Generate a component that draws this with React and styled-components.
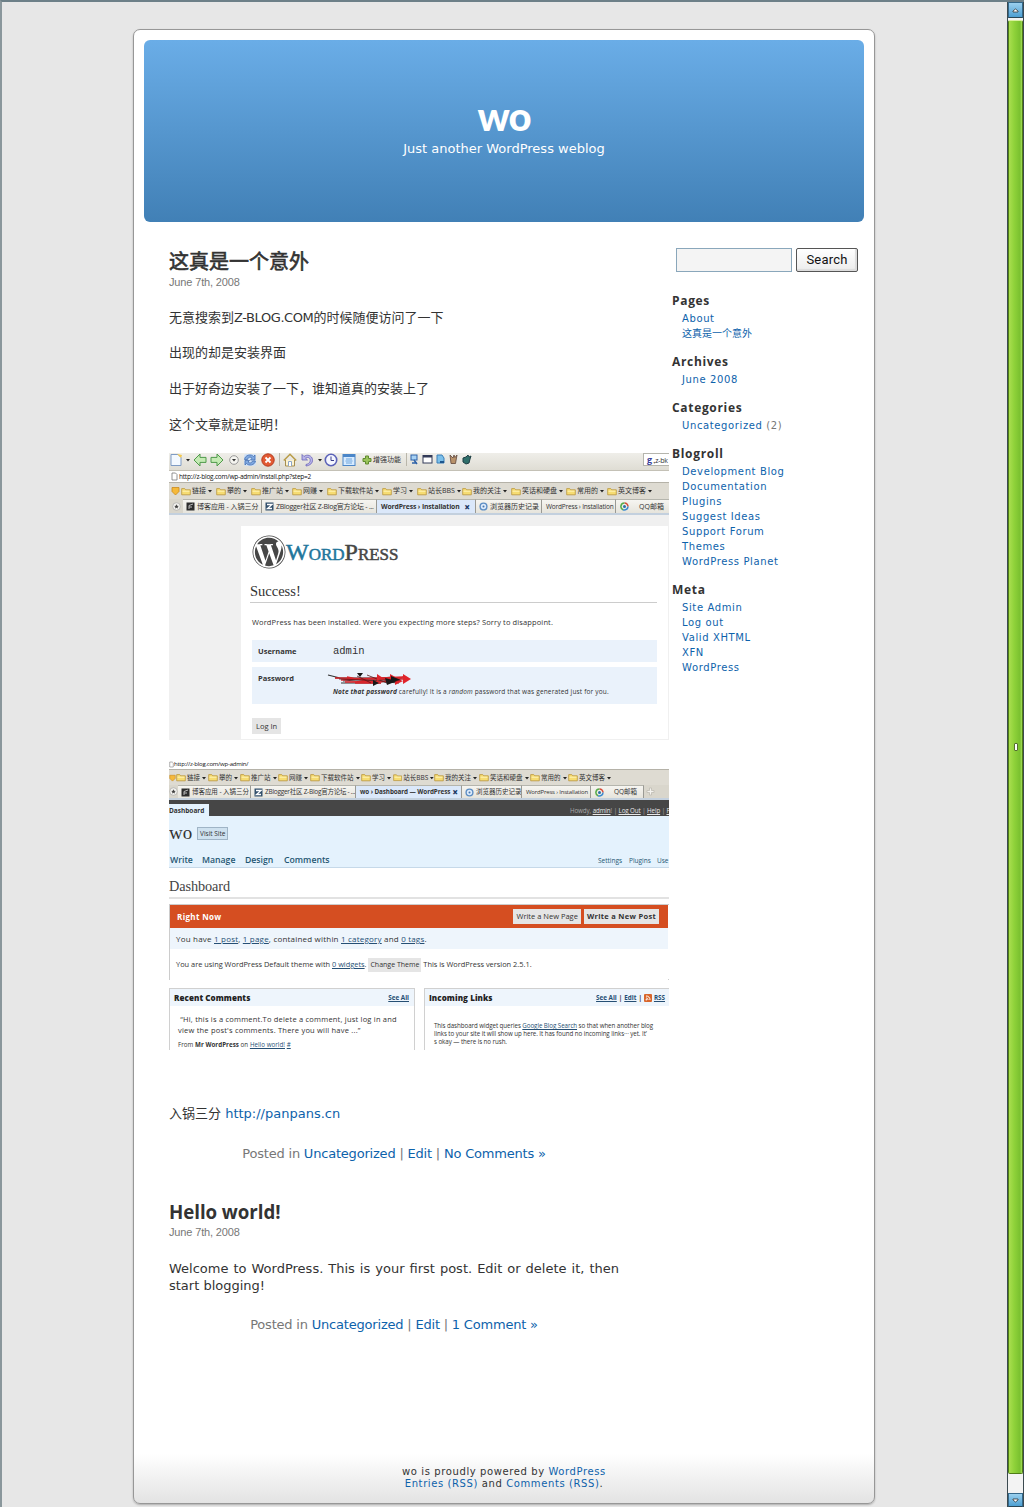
import React from "react";
import styled, { createGlobalStyle, css } from "styled-components";
import { FaWordpress } from "react-icons/fa";

const GlobalStyle = createGlobalStyle`
  *, *::before, *::after { box-sizing: border-box; }
  body { margin: 0; background: #e7e7e7; }
  a { color: #06c; text-decoration: none; }
`;

const verdana = `"DejaVu Sans", "Noto Sans CJK SC", sans-serif`;
const lucida = `"Open Sans", "Noto Sans CJK SC", sans-serif`;
const serif = `"Liberation Serif", serif`;
const tahoma = `"Open Sans", "Noto Sans CJK SC", sans-serif`;

/* ---------- window ---------- */

const Window = styled.div`
  display: flex;
  height: 1507px;
  border-top: 2px solid #6d8088;
  border-left: 2px solid #8a979c;
  background: #e7e7e7;
  font-family: ${verdana};
  color: #333;
  overflow: hidden;
`;

const Viewport = styled.div`
  width: 1005px;
  padding: 27px 0 0 131px;
`;

const ScrollBar = styled.div`
  width: 17px;
  display: flex;
  flex-direction: column;
  background: #f3f3f3;
  border-left: 1px solid #3c4a50;
  border-right: 1px solid #3c4a50;
`;

const ScrollButton = styled.div`
  height: ${(p) => p.$h}px;
  border: 1px solid #35688a;
  border-bottom-color: #2a4656;
  background: linear-gradient(#9bd0ee, #4d9fd2);
  display: flex;
  align-items: center;
  justify-content: center;
`;

const Thumb = styled.div`
  flex: 1;
  margin: 2px 0 19px;
  border: 1px solid #4f7c17;
  border-top-color: #d9f0a0;
  border-radius: 2px;
  background: linear-gradient(90deg, #a9de4f, #8fd23a 40%, #79c02f 85%, #a4dc5a);
  display: flex;
  align-items: center;
  justify-content: center;
`;

const Grip = styled.div`
  width: 4px;
  height: 8px;
  border: 1px solid #55702f;
  background: #fff;
  border-radius: 1px;
`;

/* ---------- page ---------- */

const Page = styled.div`
  width: 742px;
  height: 1475px;
  padding: 10px;
  border: 1px solid #979797;
  border-radius: 7px;
  box-shadow: 0 1px 2px rgba(0, 0, 0, 0.25);
  background: linear-gradient(#fff 0, #fff 1424px, #e3e3e3 1473px);
  display: flex;
  flex-direction: column;
`;

const Header = styled.header`
  height: 182px;
  flex: none;
  border-radius: 6px;
  background: linear-gradient(#6aade7, #4180b6);
  color: #fff;
  text-align: center;
  padding-top: 54px;
`;

const BlogTitle = styled.h1`
  margin: 0 0 3px;
  font: 900 40px/44px Lato, sans-serif;
  letter-spacing: -1px;
`;

const Tagline = styled.div`
  font-size: 13px;
  line-height: 16px;
`;

const Columns = styled.div`
  flex: 1;
  display: flex;
  padding: 26px 0 0 25px;
`;

const Content = styled.main`
  width: 450px;
  margin-right: 53px;
  flex: none;
`;

const Post = styled.article`
  height: ${(p) => p.$h}px;
  padding-top: ${(p) => p.$pt}px;
`;

const PostTitle = styled.h2`
  margin: 0;
  font: ${(p) => (p.$cjk ? 400 : 700)} ${(p) => p.$size}px/24px "Open Sans", "Noto Sans CJK SC", sans-serif;
  letter-spacing: ${(p) => p.$ls || 0}px;
  ${(p) => p.$cjk && css`-webkit-text-stroke: 0.6px currentColor;`}
`;

const PostDate = styled.div`
  margin-top: ${(p) => p.$top || 0}px;
  font: 11px/18px "Liberation Sans", sans-serif;
  letter-spacing: -0.15px;
  color: #777;
`;

const Para = styled.p`
  margin: ${(p) => p.$top}px 0 0;
  font-size: 13px;
  line-height: ${(p) => p.$lh || 18}px;
  text-align: justify;
`;

const Latin = styled.span`
  letter-spacing: -0.42px;
`;

const PostMeta = styled.p`
  margin: ${(p) => p.$top}px 0 0;
  font-size: 13px;
  line-height: 18px;
  letter-spacing: -0.2px;
  color: #777;
  text-align: center;
`;

const Sidebar = styled.aside`
  width: 190px;
`;

const SearchForm = styled.div`
  display: flex;
  gap: 4px;
  padding-left: 4px;
  margin-bottom: 21px;
`;

const SearchInput = styled.input`
  width: 116px;
  height: 24px;
  border: 1px solid #8aa7bb;
  background: #f4f4f4;
  padding: 2px;
`;

const SearchButton = styled.button`
  width: 62px;
  height: 24px;
  padding: 0;
  border: 1px solid #555;
  border-radius: 2px;
  background: linear-gradient(#fff, #ececec);
  box-shadow: inset -2px -2px 1px #dcdcdc;
  font: 13px/20px Roboto, sans-serif;
  letter-spacing: 0.2px;
  color: #111;
`;

const SideSection = styled.section`
  margin-bottom: 12px;
`;

const SideTitle = styled.h2`
  margin: 0 0 2px;
  font: 700 12px/16px "Open Sans", sans-serif;
  letter-spacing: 0.68px;
`;

const SideList = styled.ul`
  list-style: none;
  margin: 0;
  padding: 0 0 1px 10px;
  font-size: 10px;
  line-height: 15px;
  letter-spacing: 0.62px;
  color: #777;
  white-space: nowrap;
`;

const SideItem = styled.li`
  ${(p) => p.$cjk && css`letter-spacing: 0;`}
`;

const Footer = styled.footer`
  text-align: center;
  font-size: 10px;
  line-height: 12px;
  letter-spacing: 0.6px;
  padding-bottom: 3px;
`;

/* ---------- screenshots inside the post ---------- */

const Shot = styled.div`
  width: 500px;
  height: ${(p) => p.$h}px;
  margin-top: ${(p) => p.$top}px;
  overflow: hidden;
  white-space: nowrap;
  font-family: ${lucida};
  color: #333;
  background: #fff;
`;

const Bar = styled.div`
  display: flex;
  align-items: center;
  height: ${(p) => p.$h}px;
  padding-bottom: ${(p) => p.$pb || 0}px;
  font: 7px/10px ${tahoma};
  background: ${(p) => p.$bg || "#dedbd2"};
  ${(p) => p.$line && css`border-bottom: 1px solid ${p.$line};`}
`;

const Slot = styled.span`
  width: ${(p) => p.$w}px;
  flex: none;
  display: flex;
  align-items: center;
  justify-content: center;
`;

const ToolLabel = styled.span`
  width: ${(p) => p.$w}px;
  flex: none;
`;

const Address = styled.span`
  font-size: ${(p) => p.$size}px;
  letter-spacing: ${(p) => p.$ls}px;
  color: #111;
`;

const Divider = styled.span`
  width: 1px;
  height: 13px;
  background: #b9b6aa;
`;

const QuickSearch = styled.span`
  margin-left: auto;
  width: 26px;
  height: 13px;
  border: 1px solid #b5b5ad;
  border-right: 0;
  background: #fff;
  padding-left: 3px;
  font-size: 7px;
  line-height: 12px;
  letter-spacing: -0.3px;
  b { color: #3a3f9a; font-size: 9px; }
`;

const Bookmark = styled.span`
  width: ${(p) => p.$w}px;
  flex: none;
  display: flex;
  align-items: center;
  gap: 1px;
  font-size: ${(p) => p.$size}px;
`;

const TabStrip = styled.div`
  display: flex;
  align-items: stretch;
  height: ${(p) => p.$h}px;
  background: #d9d6cc;
  border-bottom: 2px solid #c3d0de;
`;

const Tab = styled.span`
  width: ${(p) => p.$w}px;
  flex: none;
  display: flex;
  align-items: center;
  gap: 2px;
  padding-left: ${(p) => p.$pl ?? 4}px;
  overflow: hidden;
  border-top: 1px solid #b5b5ad;
  border-right: 1px solid #9a9a94;
  background: ${(p) => (p.$on ? "#dbe8fa" : "linear-gradient(#f6f5f1, #e6e4dc)")};
  font: ${(p) => (p.$on ? 700 : 400)} ${(p) => p.$size}px/10px ${tahoma};
  letter-spacing: ${(p) => p.$ls || 0}px;
  svg { flex: none; }
`;

const TabClose = styled.b`
  margin: 0 5px 0 auto;
  color: #223a66;
  font-size: 10px;
`;

const InstallBody = styled.div`
  height: 225px;
  padding: 11px 1px 1px 72px;
  background: #f0f0f0;
`;

const InstallPanel = styled.div`
  height: 213px;
  background: #fff;
  padding: 9px 11px 0 9px;
`;

const LogoRow = styled.div`
  display: flex;
  align-items: center;
  height: 34px;
  padding-left: 2px;
  color: #464646;
`;

const LogoText = styled.span`
  font: 24px/34px ${serif};
  font-variant: small-caps;
  -webkit-text-stroke: 0.5px currentColor;
`;

const LogoBlue = styled.span`
  color: #21759b;
`;

const InstallTitle = styled.h3`
  margin: 12px 0 0;
  height: 22px;
  border-bottom: 1px solid #ccc;
  font: 14.5px/20px ${serif};
`;

const InstallText = styled.p`
  margin: 14px 0 12px 2px;
  font-size: 7.5px;
  line-height: 11px;
  letter-spacing: 0.12px;
`;

const Field = styled.div`
  display: flex;
  height: ${(p) => p.$h}px;
  margin: 0 0 5px 2px;
  padding: ${(p) => p.$pt}px 0 0 6px;
  background: #eaf2fb;
  font-size: 7.5px;
  line-height: 11px;
`;

const FieldName = styled.b`
  width: 75px;
`;

const Mono = styled.span`
  font: 10.500px/10px "Liberation Mono", monospace;
`;

const PasswordBody = styled.div`
  display: flex;
  flex-direction: column;
  font-size: 6.5px;
  line-height: 9px;
  letter-spacing: 0.17px;
  svg { margin: -1px 0 1px -6px; }
`;

const GreyButton = styled.span`
  display: inline-block;
  height: ${(p) => p.$h}px;
  padding: 0 ${(p) => p.$px}px;
  background: #e5e5e5;
  color: #333;
  font-size: ${(p) => p.$size}px;
  line-height: ${(p) => p.$h}px;
  letter-spacing: ${(p) => p.$ls || 0}px;
  font-weight: ${(p) => (p.$bold ? 700 : 400)};
`;

const LoginRow = styled.div`
  margin: 14px 0 0 2px;
  display: flex;
`;

const U = styled.span`
  color: #264f74;
  text-decoration: underline;
`;

const DarkBar = styled.div`
  display: flex;
  justify-content: space-between;
  align-items: flex-end;
  height: 16px;
  background: #464646;
  color: #aaa;
  font-size: 6.5px;
  line-height: 11px;
`;

const DarkTab = styled.b`
  width: 40px;
  height: 12px;
  background: #e4f2fd;
  color: #333;
  font-size: 6.5px;
  line-height: 13px;
`;

const Account = styled.span`
  width: 99px;
  font-size: 6.2px;
  letter-spacing: -0.08px;
  u { color: #e8e8e8; }
`;

const AdminHead = styled.div`
  height: 52px;
  background: #e4f2fd;
  border-bottom: 1px solid #c6d9e9;
  padding-top: 7px;
`;

const SiteRow = styled.div`
  display: flex;
  align-items: center;
  height: 20px;
  gap: 5px;
  font: 19px/20px ${serif};
`;

const VisitSite = styled.span`
  width: 31px;
  height: 13px;
  border: 1px solid #9fb4c6;
  background: #cee1ef;
  font: 6.5px/11px ${lucida};
  text-align: center;
`;

const MenuRow = styled.div`
  display: flex;
  align-items: center;
  height: 14px;
  margin-top: 10px;
  padding-left: 1px;
  color: #1f5672;
`;

const MenuItem = styled.span`
  width: ${(p) => p.$w}px;
  flex: none;
  font-size: ${(p) => (p.$small ? 6.5 : 8.7)}px;
  font-weight: ${(p) => (p.$small ? 400 : 600)};
`;

const MenuSpace = styled.span`
  flex: 1;
`;

const DashTitle = styled.h3`
  margin: 0;
  height: 31px;
  border-bottom: 2px solid #e2e2e2;
  font: 14.300px/36px ${serif};
  letter-spacing: -0.1px;
  color: #444;
`;

const RightNow = styled.div`
  margin-top: 5px;
  height: 76px;
  border: 1px solid #ccc;
  border-right: 0;
`;

const RightNowHead = styled.div`
  display: flex;
  align-items: center;
  gap: 3px;
  height: 23px;
  margin-right: 1px;
  padding: 0 9px 0 7px;
  background: #d54e21;
  font-size: 8px;
`;

const HeadLabel = styled.b`
  color: #fff;
  margin-right: auto;
  letter-spacing: 0.35px;
`;

const RightNowLine = styled.div`
  height: ${(p) => p.$h}px;
  padding-left: 6px;
  margin-right: 1px;
  background: ${(p) => p.$bg || "#fff"};
  font-size: ${(p) => p.$size}px;
  line-height: ${(p) => p.$h}px;
  letter-spacing: ${(p) => p.$ls || 0}px;
`;

const Widgets = styled.div`
  display: flex;
  gap: 9px;
  margin-top: 8px;
`;

const Widget = styled.div`
  width: 246px;
  flex: none;
  height: 70px;
  border: 1px solid #d0d0d0;
`;

const WidgetHead = styled.div`
  display: flex;
  align-items: center;
  gap: 2px;
  height: 17px;
  padding: 0 ${(p) => p.$pr}px 0 4px;
  background: #eef5fc;
  font-size: 6.3px;
  font-weight: 700;
  strong { font-size: 8px; margin-right: auto; color: #222; letter-spacing: 0.08px; }
`;

const Comment = styled.div`
  padding: 8px 0 0 8px;
  font-size: 7.5px;
  line-height: 11px;
  letter-spacing: 0.21px;
`;

const From = styled.div`
  margin-top: 3px;
  font-size: 6.2px;
  letter-spacing: 0.05px;
`;

const LinksText = styled.div`
  padding: 16px 0 0 9px;
  font-size: 6.2px;
  line-height: 8px;
  letter-spacing: -0.06px;
`;

/* ---------- icons ---------- */

const Svg = ({ w = 14, h = 14, children }) => (
  <svg width={w} height={h} viewBox={`0 0 ${w} ${h}`} fill="none">{children}</svg>
);
const Caret = () => <Svg w={5} h={4}><path d="M1 1h4L3 3.4z" fill="#222" /></Svg>;
const Folder = () => (
  <Svg w={10} h={9}><path d="M.7 7.8V1.6h3l1 1.2h4.6v5z" fill="#f6dc72" stroke="#b9953c" strokeWidth=".8" /><path d="M1.5 4.2h7" stroke="#fff3b5" /></Svg>
);
const PageIcon = () => <Svg w={12}><path d="M1 1.5h7l3 3v8H1z" fill="#f3f9ff" stroke="#7f9cc4" /><path d="M7 1l4 4 1-3z" fill="#f4c94e" /></Svg>;
const Back = () => <Svg><path d="M1 7l6-6v3.4h6v5H7V13z" fill="#c5ebb4" stroke="#4f9a4a" /></Svg>;
const Fwd = () => <Svg><path d="M13 7L7 1v3.4H1v5h6V13z" fill="#c5ebb4" stroke="#4f9a4a" /></Svg>;
const Drop = () => <Svg w={10}><circle cx="5" cy="7" r="4.3" fill="#f5f5f0" stroke="#999" /><path d="M3 6h4L5 8.6z" fill="#333" /></Svg>;
const Refresh = () => <Svg><rect x="1" y="1" width="12" height="12" rx="2" fill="#cfe1f6" /><path d="M1.500 6.500C2 2 8 .500 10.500 3.500L12 2v5H7.500L9 5.200C7.500 3.500 5 4 4.600 6.500zM12.500 8C12 12 6 13.500 3.500 10.500L2 12V7.500h4.500L5 9C6.500 10.500 9 10 9.600 8z" fill="#7fa8e0" stroke="#3e68ab" strokeWidth=".7" /></Svg>;
const Stop = () => <Svg><circle cx="7" cy="7" r="6.2" fill="#e25a33" stroke="#b5391d" /><path d="M4.500 4.500l5 5m0-5l-5 5" stroke="#fff" strokeWidth="1.800" /></Svg>;
const Home = () => <Svg><path d="M2.500 7v6h9V7" fill="#fdf3cf" stroke="#a58d4f" /><path d="M.8 7.500L7 1.300l6.200 6.200" stroke="#b89b46" strokeWidth="1.500" /><path d="M5.500 13V8.500h3V13" fill="#fff" stroke="#8ba5c8" /></Svg>;
const Undo = () => <Svg><path d="M2 1.500V7h5.500L5.600 5.200C8 3.500 11 5 10 8.500 9.600 10 8 11 6 11.500v1.500C10 12.500 13 10 12.500 6.500 12 2.500 7 .8 4 3.500z" fill="#b9b5ea" stroke="#6b64b8" strokeWidth=".8" /></Svg>;
const Clock = () => <Svg><circle cx="7" cy="7" r="5.700" fill="#f4f6ff" stroke="#5b62b8" strokeWidth="1.600" /><path d="M7 3.500V7.500h3" stroke="#3a3f8a" /></Svg>;
const Full = () => <Svg><rect x="1" y="1.500" width="12" height="11" fill="#d7ebff" stroke="#4b86c8" /><path d="M1 3h12" stroke="#4b86c8" strokeWidth="2" /><path d="M4 6h6M4 10h6M3.500 8h7" stroke="#6ea5dc" /></Svg>;
const Plus = () => <Svg w={10}><path d="M3.500 3h3v2.500H9v3H6.500V11h-3V8.500H1v-3h2.500z" fill="#9ac45b" stroke="#5f8a2e" /></Svg>;
const Pc = () => <Svg w={9} h={11}><rect x="1" y="1" width="6" height="5" fill="#a8d2f4" stroke="#2e62a8" /><path d="M4 6l3 4M2 9h5" stroke="#2e62a8" strokeWidth="1.500" /></Svg>;
const Win = () => <Svg w={11} h={11}><rect x="1" y="1.500" width="9" height="7.500" fill="#fff" stroke="#333b58" /><path d="M1 2.500h9" stroke="#333b58" strokeWidth="2" /></Svg>;
const Doc = () => <Svg w={9} h={11}><path d="M1 1h5l2 3v5H1z" fill="#7cc0ea" stroke="#3a7fb8" /><path d="M4 8h4" stroke="#1d568e" strokeWidth="2" /></Svg>;
const Cup = () => <Svg w={9} h={11}><path d="M1 1l1 8.500h4.500L8 1 6 3.500 5 1 4 4z" fill="#b8926a" stroke="#5f463a" strokeWidth=".8" /></Svg>;
const Bug = () => <Svg w={11} h={11}><path d="M2 4l3-1 2-2 1 2 2-1-1 3-1 4-3 1-3-2z" fill="#2f6f6a" stroke="#1f3f45" /></Svg>;
const Shield = () => <Svg w={9} h={10}><path d="M1 1.500h7v4L4.500 9 1 5.500z" fill="#f5b93a" stroke="#c98a1d" strokeWidth=".8" /></Svg>;
const Sheet = () => <Svg w={7} h={9}><path d="M1 1h3.500L6 2.500V8H1z" fill="#fff" stroke="#777" strokeWidth=".8" /></Svg>;
const Star = () => <Svg w={9} h={9}><circle cx="4.500" cy="4.500" r="3.800" fill="#f3f2ee" stroke="#aaa" strokeWidth=".7" /><path d="M4.500 2.300l.7 1.500 1.600.1-1.200 1.100.4 1.600-1.500-.9-1.500.9.4-1.600L2.200 3.900l1.600-.1z" fill="#444" /></Svg>;
const DarkIco = () => <Svg w={9} h={9}><rect x=".5" y=".5" width="8" height="8" fill="#2c2c2c" /><path d="M3 7V3.500L7 2M3 5h3" stroke="#bbb" /></Svg>;
const ZIco = () => <Svg w={9} h={9}><rect x=".5" y=".5" width="8" height="8" fill="#33506c" /><path d="M2 2.500h5L2.500 6.500H7" stroke="#fff" strokeWidth="1.300" /></Svg>;
const EyeIco = () => <Svg w={9} h={9}><circle cx="4.500" cy="4.500" r="3.400" fill="#dceafa" stroke="#5d8ec4" strokeWidth="1.400" /><circle cx="4.500" cy="4.500" r="1" fill="#4777ad" /></Svg>;
const QqIco = () => <Svg w={9} h={9}><path d="M4.500 1A3.500 3.500 0 0 1 8 4.500" stroke="#d84b38" strokeWidth="1.500" /><path d="M8 4.500A3.500 3.500 0 0 1 3 7.700" stroke="#3b8ad0" strokeWidth="1.500" /><path d="M3 7.700A3.500 3.500 0 0 1 4.500 1" stroke="#56ab48" strokeWidth="1.500" /><circle cx="4.500" cy="4.500" r="1.500" fill="#2d70a5" /></Svg>;
const NewTab = () => <Svg w={9} h={9}><path d="M3.500 1h2v2.500H8v2H5.500V8h-2V5.500H1v-2h2.500z" fill="#f4f3ef" stroke="#b9b6ad" strokeWidth=".7" /></Svg>;
const Rss = () => <Svg w={8} h={8}><rect width="8" height="8" rx="1" fill="#d9662c" /><path d="M2 2c2.500 0 4 1.500 4 4M2 4c1.300 0 2 .8 2 2" stroke="#fff" /><circle cx="2.300" cy="5.800" r=".7" fill="#fff" /></Svg>;
const Scribble = () => (
  <Svg w={86} h={14}>
    <path d="M1 3l12 3 60 2M8 6h70M16 9l50-4M14 11h40M22 7l50 4" stroke="#333" strokeWidth="1.200" />
    <path d="M8 6l70 1M14 8l62-3M18 10l56-1M20 5l30 6 26-6M28 11h26" stroke="#d8262c" strokeWidth="1.700" />
    <path d="M12 7l50 2M30 4l14 7M40 3l20 8" stroke="#5a1518" strokeWidth=".8" />
    <path d="M50 2l6 4-6 3zM63 2l7 4-7 4zM76 2l8 5-8 5zM68 6l8 3-8 4z" fill="#e0242b" />
    <path d="M30 1h6l-3 4zM46 8l6 3-6 3zM58 6l12 3-10 4zM64 4l10 4-10 2z" fill="#181818" />
  </Svg>
);

/* ---------- data ---------- */

const names = ["链接", "攀的", "推广站", "网赚", "下载软件站", "学习", "站长BBS", "我的关注", "笑话和硬盘", "常用的", "英文博客"];
const widthsA = [35, 35, 41, 35, 55, 35, 45, 49, 55, 41, 48];
const widthsB = [32, 32, 38, 32, 51, 32, 41, 45, 51, 38, 45];

const cjkTitle = "这真是一个意外";

const sections = [
  ["Pages", ["About", cjkTitle]],
  ["Archives", ["June 2008"]],
  ["Categories", ["Uncategorized"]],
  ["Blogroll", ["Development Blog", "Documentation", "Plugins", "Suggest Ideas", "Support Forum", "Themes", "WordPress Planet"]],
  ["Meta", ["Site Admin", "Log out", "Valid XHTML", "XFN", "WordPress"]],
];

const Link = styled.a.attrs({ href: "#" })`
  && { color: #0d62ab; }
`;

const Bookmarks = ({ widths, size }) =>
  names.map((n, i) => (
    <Bookmark key={n} $w={widths[i]} $size={size}><Folder />{n}<Caret /></Bookmark>
  ));

const Tabs = ({ widths, size, h, lead, active, activeLs, extra }) => (
  <TabStrip $h={h}>
    <Slot $w={lead}><Star /></Slot>
    <Tab $w={widths[0]} $size={size} $pl={3} $ls={-0.05}><DarkIco />博客应用 - 入锅三分</Tab>
    <Tab $w={widths[1]} $size={size} $pl={3} $ls={-0.26}><ZIco />ZBlogger社区 Z-Blog官方论坛 - ...</Tab>
    <Tab $w={widths[2]} $size={size - 0.2} $on $ls={activeLs}>{active}<TabClose>×</TabClose></Tab>
    <Tab $w={widths[3]} $size={size} $pl={3}><EyeIco />浏览器历史记录</Tab>
    <Tab $w={widths[4]} $size={size - 0.5} $ls={-0.18}>WordPress › Installation</Tab>
    <Tab $w={widths[5]} $size={size}><QqIco /><Slot $w={6} />QQ邮箱</Tab>
    {extra && <Slot $w={12}><NewTab /></Slot>}
  </TabStrip>
);

const InstallShot = () => (
  <Shot $h={287} $top={19}>
    <Bar $h={18} $pb={4} $bg="linear-gradient(#efeee9, #dfddd4)" $line="#c4c1b6">
      <Slot $w={13}><PageIcon /></Slot><Slot $w={10}><Caret /></Slot>
      <Slot $w={16}><Back /></Slot><Slot $w={18}><Fwd /></Slot>
      <Slot $w={16}><Drop /></Slot><Slot $w={16}><Refresh /></Slot>
      <Slot $w={19}><Stop /></Slot><Slot $w={5}><Divider /></Slot>
      <Slot $w={15}><Home /></Slot><Slot $w={19}><Undo /></Slot>
      <Slot $w={6}><Caret /></Slot><Slot $w={18}><Clock /></Slot>
      <Slot $w={18}><Full /></Slot><Slot $w={3} /><Slot $w={12}><Plus /></Slot>
      <ToolLabel $w={32}>增强功能</ToolLabel><Slot $w={3}><Divider /></Slot>
      <Slot $w={12}><Pc /></Slot><Slot $w={14}><Win /></Slot>
      <Slot $w={12}><Doc /></Slot><Slot $w={15}><Cup /></Slot><Slot $w={11}><Bug /></Slot>
      <QuickSearch><b>g</b> ₊z-bk</QuickSearch>
    </Bar>
    <Bar $h={12} $bg="#fff" $line="#b5b2a8">
      <Slot $w={10}><Sheet /></Slot><Address $size={6.5} $ls={-0.22}>http://z-blog.com/wp-admin/install.php?step=2</Address>
    </Bar>
    <Bar $h={16}><Slot $w={12}><Shield /></Slot><Bookmarks widths={widthsA} size={7} /></Bar>
    <Tabs h={16} lead={14} size={7} widths={[79, 115, 99, 66, 74, 54]} active="WordPress › Installation" activeLs={-0.12} />
    <InstallBody>
      <InstallPanel>
        <LogoRow>
          <FaWordpress size={34} />
          <LogoText><LogoBlue>Word</LogoBlue>Press</LogoText>
        </LogoRow>
        <InstallTitle>Success!</InstallTitle>
        <InstallText>WordPress has been installed. Were you expecting more steps? Sorry to disappoint.</InstallText>
        <Field $h={22} $pt={6}><FieldName>Username</FieldName><Mono>admin</Mono></Field>
        <Field $h={37} $pt={6}>
          <FieldName>Password</FieldName>
          <PasswordBody>
            <Scribble />
            <span><b><i>Note that password</i></b> carefully! It is a <i>random</i> password that was generated just for you.</span>
          </PasswordBody>
        </Field>
        <LoginRow><GreyButton $h={16} $px={4} $size={7.5}>Log In</GreyButton></LoginRow>
      </InstallPanel>
    </InstallBody>
  </Shot>
);

const DashboardShot = () => (
  <Shot $h={291} $top={19}>
    <Bar $h={11} $bg="#fff" $line="#b5b2a8">
      <Slot $w={5}><Sheet /></Slot><Address $size={6} $ls={-0.23}>http://z-blog.com/wp-admin/</Address>
    </Bar>
    <Bar $h={15}><Slot $w={7}><Shield /></Slot><Bookmarks widths={widthsB} size={6.5} /></Bar>
    <Tabs h={15} lead={9} size={6.5} widths={[73, 105, 106, 60, 69, 53]} active="wo › Dashboard — WordPress" activeLs={-0.08} extra />
    <DarkBar>
      <DarkTab>Dashboard</DarkTab>
      <Account>Howdy, <u>admin</u>! | <u>Log Out</u> | <u>Help</u> | <u>Fo</u></Account>
    </DarkBar>
    <AdminHead>
      <SiteRow>wo<VisitSite>Visit Site</VisitSite></SiteRow>
      <MenuRow>
        <MenuItem $w={32}>Write</MenuItem><MenuItem $w={43}>Manage</MenuItem>
        <MenuItem $w={39}>Design</MenuItem><MenuItem $w={46}>Comments</MenuItem>
        <MenuSpace />
        <MenuItem $small $w={31}>Settings</MenuItem><MenuItem $small $w={28}>Plugins</MenuItem>
        <MenuItem $small $w={12}>Use</MenuItem>
      </MenuRow>
    </AdminHead>
    <DashTitle>Dashboard</DashTitle>
    <RightNow>
      <RightNowHead>
        <HeadLabel>Right Now</HeadLabel>
        <GreyButton $h={15} $px={3} $size={7.5}>Write a New Page</GreyButton>
        <GreyButton $h={15} $px={3} $size={7.5} $ls={0.3} $bold>Write a New Post</GreyButton>
      </RightNowHead>
      <RightNowLine $h={21} $size={8} $ls={0.2} $bg="#eef5fc">You have <U>1 post</U>, <U>1 page</U>, contained within <U>1 category</U> and <U>0 tags</U>.</RightNowLine>
      <RightNowLine $h={31} $size={7.4}>You are using WordPress Default theme with <U>0 widgets</U>. <GreyButton $h={14} $px={2} $size={7}>Change Theme</GreyButton> This is WordPress version 2.5.1.</RightNowLine>
    </RightNow>
    <Widgets>
      <Widget>
        <WidgetHead $pr={5}><strong>Recent Comments</strong><U>See All</U></WidgetHead>
        <Comment>
          &nbsp;“Hi, this is a comment.To delete a comment, just log in and<br />view the post's comments. There you will have ...”
          <From>From <b>Mr WordPress</b> on <U>Hello world!</U> <U>#</U></From>
        </Comment>
      </Widget>
      <Widget>
        <WidgetHead $pr={4}><strong>Incoming Links</strong><U>See All</U> | <U>Edit</U> | <Rss /> <U>RSS</U></WidgetHead>
        <LinksText>
          This dashboard widget queries <U>Google Blog Search</U> so that when another blog<br />
          links to your site it will show up here. It has found no incoming links··· yet. It’<br />
          s okay — there is no rush.
        </LinksText>
      </Widget>
    </Widgets>
  </Shot>
);

export default function App() {
  return (
    <>
      <GlobalStyle />
      <Window>
        <Viewport>
          <Page>
            <Header>
              <BlogTitle>wo</BlogTitle>
              <Tagline>Just another WordPress weblog</Tagline>
            </Header>
            <Columns>
              <Content>
                <Post $h={952} $pt={2}>
                  <PostTitle $size={20} $cjk>{cjkTitle}</PostTitle>
                  <PostDate $top={-1}>June 7th, 2008</PostDate>
                  <Para $top={18}>无意搜索到<Latin>Z-BLOG.COM</Latin>的时候随便访问了一下</Para>
                  <Para $top={17}>出现的却是安装界面</Para>
                  <Para $top={18}>出于好奇边安装了一下，谁知道真的安装上了</Para>
                  <Para $top={18}>这个文章就是证明！</Para>
                  <InstallShot />
                  <DashboardShot />
                  <Para $top={55}>入锅三分 <Link>http://panpans.cn</Link></Para>
                  <PostMeta $top={22}>Posted in <Link>Uncategorized</Link> | <Link>Edit</Link> | <Link>No Comments »</Link></PostMeta>
                </Post>
                <Post $h={140} $pt={0}>
                  <PostTitle $size={18.7} $ls={-0.05}>Hello world!</PostTitle>
                  <PostDate $top={-1}>June 7th, 2008</PostDate>
                  <Para $top={19} $lh={17}>Welcome to WordPress. This is your first post. Edit or delete it, then start blogging!</Para>
                  <PostMeta $top={22}>Posted in <Link>Uncategorized</Link> | <Link>Edit</Link> | <Link>1 Comment »</Link></PostMeta>
                </Post>
              </Content>
              <Sidebar>
                <SearchForm>
                  <SearchInput aria-label="Search" />
                  <SearchButton>Search</SearchButton>
                </SearchForm>
                {sections.map(([title, items]) => (
                  <SideSection key={title}>
                    <SideTitle>{title}</SideTitle>
                    <SideList>
                      {items.map((item) => (
                        <SideItem key={item} $cjk={item === cjkTitle}>
                          <Link>{item}</Link>{title === "Categories" && " (2)"}
                        </SideItem>
                      ))}
                    </SideList>
                  </SideSection>
                ))}
              </Sidebar>
            </Columns>
            <Footer>
              wo is proudly powered by <Link>WordPress</Link><br />
              <Link>Entries (RSS)</Link> and <Link>Comments (RSS)</Link>.
            </Footer>
          </Page>
        </Viewport>
        <ScrollBar>
          <ScrollButton $h={16}><Svg w={7} h={5}><path d="M1 4V3l2.500-2L6 3v1z" fill="#fff" stroke="#333" strokeWidth=".8" /></Svg></ScrollButton>
          <Thumb><Grip /></Thumb>
          <ScrollButton $h={14}><Svg w={7} h={5}><path d="M1 1v1l2.500 2L6 2V1z" fill="#fff" stroke="#333" strokeWidth=".8" /></Svg></ScrollButton>
        </ScrollBar>
      </Window>
    </>
  );
}
